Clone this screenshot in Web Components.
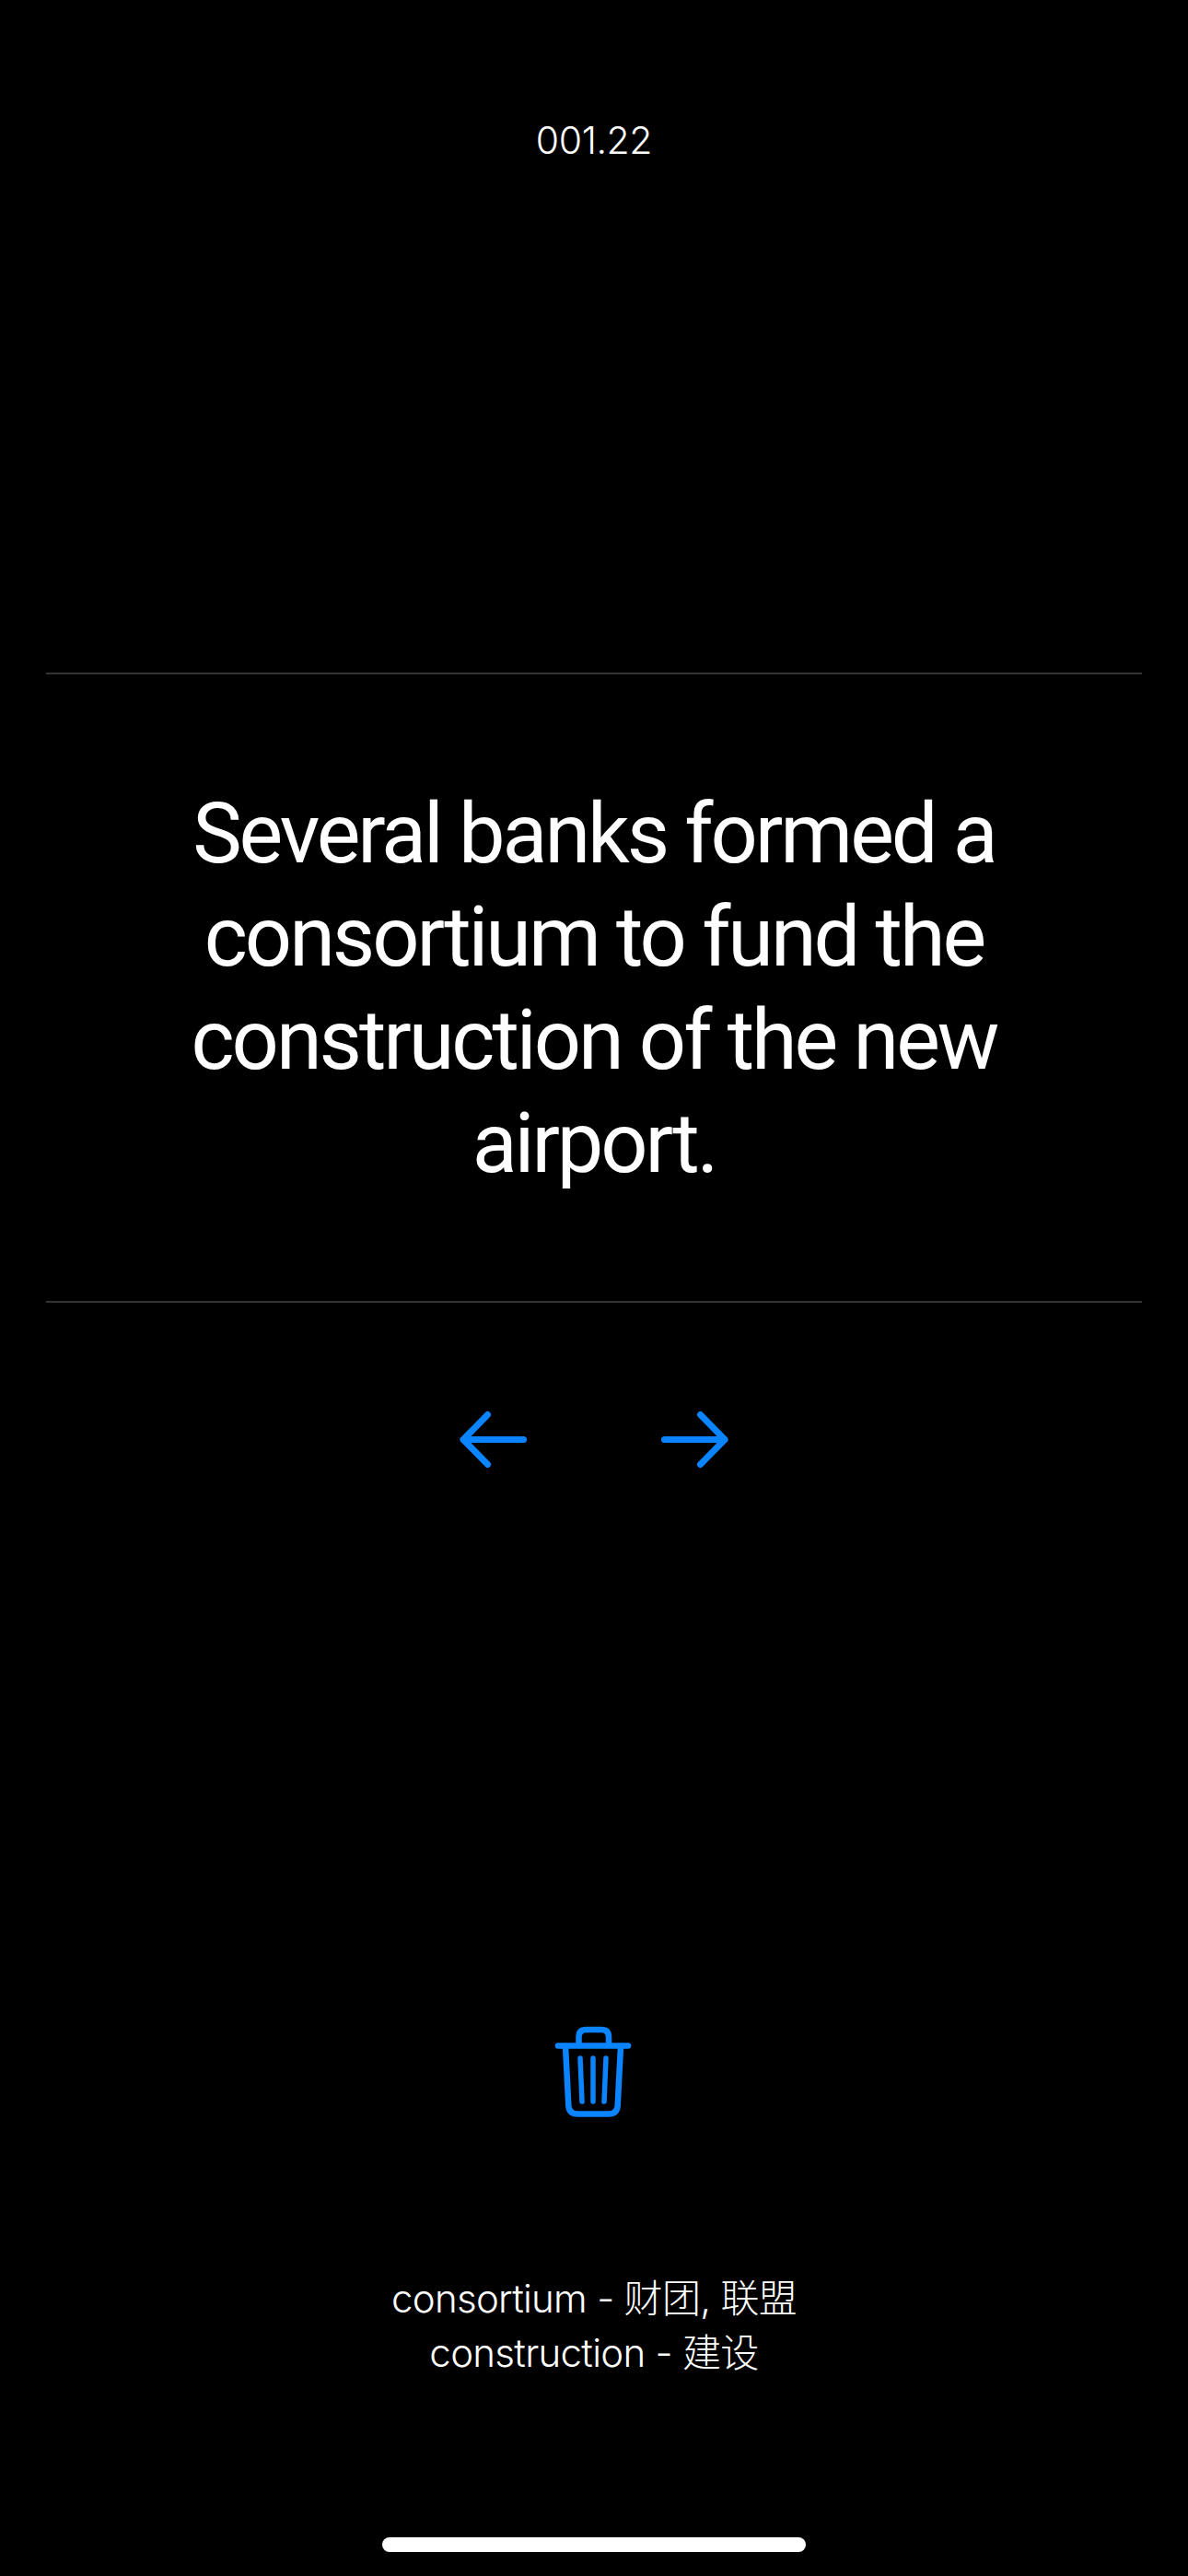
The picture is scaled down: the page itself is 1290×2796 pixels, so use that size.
<!DOCTYPE html>
<html lang="en">
<head>
<meta charset="utf-8">
<title>Sentence card</title>
<style>
    html, body { margin: 0; background: #000; }
    body { font-family: Inter, "Noto Sans CJK SC", sans-serif; color: #fff; }
</style>
</head>
<body>
<card-screen>
    <card-index slot="index">001.22</card-index>
    <card-sentence slot="sentence">Several banks formed a<br>consortium to fund the<br>construction of the new<br>airport.</card-sentence>
    <card-nav slot="nav"></card-nav>
    <trash-button slot="trash"></trash-button>
    <card-glossary slot="glossary">consortium - 财团, 联盟<br>construction - 建设</card-glossary>
    <home-indicator slot="home"></home-indicator>
</card-screen>

<script>
class CardScreen extends HTMLElement {
    constructor() {
        super();
        this.attachShadow({ mode: "open" });
        this.shadowRoot.innerHTML = `
            <style>
                :host {
                    display: flex;
                    flex-direction: column;
                    width: 1290px; height: 2796px;
                    background: #000;
                    overflow: hidden;
                }
            </style>
            <slot name="index"></slot>
            <slot name="sentence"></slot>
            <slot name="nav"></slot>
            <slot name="trash"></slot>
            <slot name="glossary"></slot>
            <slot name="home"></slot>
        `;
    }
}
customElements.define("card-screen", CardScreen);

class CardIndex extends HTMLElement {
    constructor() {
        super();
        this.attachShadow({ mode: "open" });
        this.shadowRoot.innerHTML = `
            <style>
                :host {
                    display: block;
                    box-sizing: border-box;
                    height: 730px;
                    padding-top: 124px;
                    text-align: center;
                    font-size: 41px;
                    line-height: 56px;
                    letter-spacing: -0.4px;
                    font-weight: 300;
                }
            </style>
            <slot></slot>
        `;
    }
}
customElements.define("card-index", CardIndex);

class CardSentence extends HTMLElement {
    constructor() {
        super();
        this.attachShadow({ mode: "open" });
        this.shadowRoot.innerHTML = `
            <style>
                :host {
                    display: flex;
                    align-items: center;
                    justify-content: center;
                    box-sizing: border-box;
                    height: 684px;
                    padding-top: 3px;
                    margin: 0 50px;
                    border-top: 2px solid #333336;
                    border-bottom: 2px solid #333336;
                    text-align: center;
                    font-family: Roboto, sans-serif;
                    font-size: 90px;
                    line-height: 112px;
                    letter-spacing: -3.05px;
                    font-weight: 400;
                }
            </style>
            <div><slot></slot></div>
        `;
    }
}
customElements.define("card-sentence", CardSentence);

class CardNav extends HTMLElement {
    constructor() {
        super();
        this.attachShadow({ mode: "open" });
        this.shadowRoot.innerHTML = `
            <style>
                :host {
                    display: flex;
                    justify-content: center;
                    gap: 130px;
                    padding-top: 102px;
                    height: 84px;
                    color: #0a84ff;
                }
                svg { display: block; }
            </style>
            <svg width="90" height="84" viewBox="0 0 90 84" fill="none" stroke="currentColor" stroke-width="7" stroke-linecap="round" stroke-linejoin="round">
                <path d="M78.5 46.5H13M39.5 19.5 13 46.5 39.5 73.5"/>
            </svg>
            <svg width="90" height="84" viewBox="0 0 90 84" fill="none" stroke="currentColor" stroke-width="7" stroke-linecap="round" stroke-linejoin="round">
                <path d="M11.5 46.5H77M50.5 19.5 77 46.5 50.5 73.5"/>
            </svg>
        `;
    }
}
customElements.define("card-nav", CardNav);

class TrashButton extends HTMLElement {
    constructor() {
        super();
        this.attachShadow({ mode: "open" });
        this.shadowRoot.innerHTML = `
            <style>
                :host {
                    display: flex;
                    justify-content: center;
                    padding-top: 580px;
                    color: #0a84ff;
                }
                svg { display: block; }
            </style>
            <svg width="150" height="130" viewBox="0 0 150 130" fill="none" stroke="currentColor" stroke-width="6.5" stroke-linecap="round" stroke-linejoin="round">
                <path d="M36 40.5H112"/>
                <path d="M58.5 40V31Q58.5 23 66.5 23H83Q91 23 91 31V40"/>
                <path d="M44 41 47.3 105Q47.8 114.5 57 114.5H91Q100.2 114.5 100.7 105L104 41"/>
                <path d="M60 54 62 101M74 54V101M88 54 86 101" stroke-width="5.5"/>
            </svg>
        `;
    }
}
customElements.define("trash-button", TrashButton);

class CardGlossary extends HTMLElement {
    constructor() {
        super();
        this.attachShadow({ mode: "open" });
        this.shadowRoot.innerHTML = `
            <style>
                :host {
                    display: block;
                    padding-top: 155px;
                    text-align: center;
                    font-size: 42px;
                    line-height: 59px;
                    letter-spacing: -0.7px;
                    font-weight: 300;
                }
            </style>
            <slot></slot>
        `;
    }
}
customElements.define("card-glossary", CardGlossary);

class HomeIndicator extends HTMLElement {
    constructor() {
        super();
        this.attachShadow({ mode: "open" });
        this.shadowRoot.innerHTML = `
            <style>
                :host {
                    display: block;
                    width: 460px; height: 16px;
                    margin: auto auto 26px;
                    border-radius: 8px;
                    background: #fff;
                }
            </style>
        `;
    }
}
customElements.define("home-indicator", HomeIndicator);
</script>
</body>
</html>
